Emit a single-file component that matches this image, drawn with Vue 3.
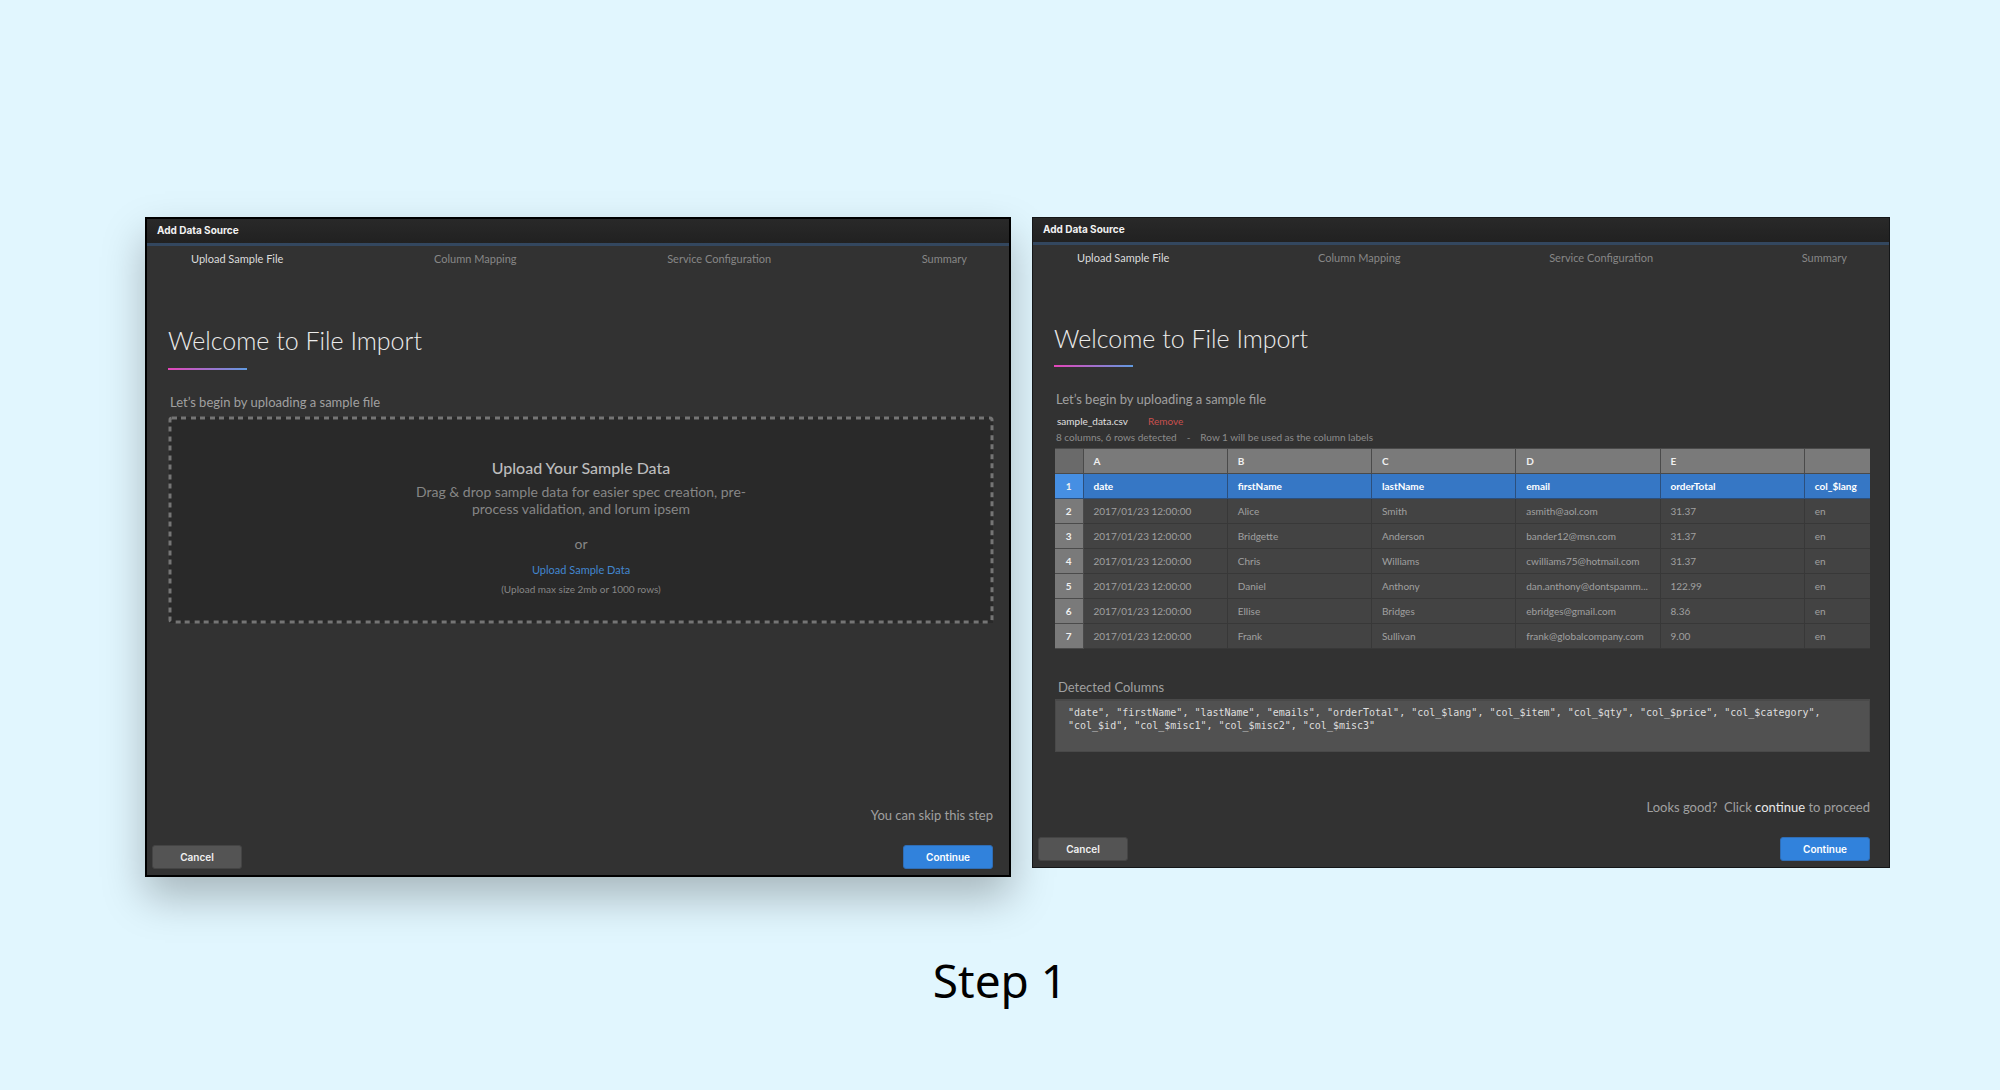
<script setup>
import { ref } from 'vue'

const steps = ['Upload Sample File', 'Column Mapping', 'Service Configuration', 'Summary']
const letters = ['A', 'B', 'C', 'D', 'E', '']
const labels = ['date', 'firstName', 'lastName', 'email', 'orderTotal', 'col_$lang']
const rows = [
  ['2017/01/23 12:00:00', 'Alice', 'Smith', 'asmith@aol.com', '31.37', 'en'],
  ['2017/01/23 12:00:00', 'Bridgette', 'Anderson', 'bander12@msn.com', '31.37', 'en'],
  ['2017/01/23 12:00:00', 'Chris', 'Williams', 'cwilliams75@hotmail.com', '31.37', 'en'],
  ['2017/01/23 12:00:00', 'Daniel', 'Anthony', 'dan.anthony@dontspamm...', '122.99', 'en'],
  ['2017/01/23 12:00:00', 'Ellise', 'Bridges', 'ebridges@gmail.com', '8.36', 'en'],
  ['2017/01/23 12:00:00', 'Frank', 'Sullivan', 'frank@globalcompany.com', '9.00', 'en'],
]
const detected = ref(
  [
    'date', 'firstName', 'lastName', 'emails', 'orderTotal', 'col_$lang', 'col_$item', 'col_$qty',
    'col_$price', 'col_$category', 'col_$id', 'col_$misc1', 'col_$misc2', 'col_$misc3',
  ].map((name) => `"${name}"`).join(', ')
)
</script>

<template>
  <main class="board">
    <div class="panels">
      <section class="panel upload">
        <header class="bar">Add Data Source</header>
        <nav class="steps">
          <a v-for="(step, i) in steps" :key="step" href="#" :class="{ active: i === 0 }">{{ step }}</a>
        </nav>
        <div class="body">
          <h1>Welcome to File Import</h1>
          <div class="rule"></div>
          <p class="intro">Let’s begin by uploading a sample file</p>
          <div class="dropzone">
            <svg class="outline" aria-hidden="true"><rect /></svg>
            <h2>Upload Your Sample Data</h2>
            <p class="hint">Drag &amp; drop sample data for easier spec creation, pre-<br />process validation, and lorum ipsem</p>
            <p class="or">or</p>
            <a href="#" class="pick">Upload Sample Data</a>
            <p class="limit">(Upload max size 2mb or 1000 rows)</p>
          </div>
          <p class="note">You can skip this step</p>
        </div>
        <footer class="actions">
          <button type="button">Cancel</button>
          <button type="button" class="primary">Continue</button>
        </footer>
      </section>

      <section class="panel preview">
        <header class="bar">Add Data Source</header>
        <nav class="steps">
          <a v-for="(step, i) in steps" :key="step" href="#" :class="{ active: i === 0 }">{{ step }}</a>
        </nav>
        <div class="body">
          <h1>Welcome to File Import</h1>
          <div class="rule"></div>
          <p class="intro">Let’s begin by uploading a sample file</p>
          <div class="file">
            <span>sample_data.csv</span>
            <a href="#">Remove</a>
          </div>
          <div class="summary">
            <span>8 columns, 6 rows detected</span>
            <span>-</span>
            <span>Row 1 will be used as the column labels</span>
          </div>
          <table>
            <colgroup>
              <col class="num" />
              <col v-for="n in 5" :key="n" class="wide" />
              <col />
            </colgroup>
            <thead>
              <tr>
                <th></th>
                <th v-for="(letter, i) in letters" :key="i">{{ letter }}</th>
              </tr>
            </thead>
            <tbody>
              <tr class="labels">
                <th>1</th>
                <td v-for="label in labels" :key="label">{{ label }}</td>
              </tr>
              <tr v-for="(row, r) in rows" :key="r">
                <th>{{ r + 2 }}</th>
                <td v-for="(cell, c) in row" :key="c">{{ cell }}</td>
              </tr>
            </tbody>
          </table>
          <label class="detected" for="detected-columns">Detected Columns</label>
          <textarea id="detected-columns" v-model="detected" readonly></textarea>
          <p class="note">Looks good?&nbsp; Click <strong>continue</strong> to proceed</p>
        </div>
        <footer class="actions">
          <button type="button">Cancel</button>
          <button type="button" class="primary">Continue</button>
        </footer>
      </section>
    </div>
    <p class="caption">Step 1</p>
  </main>
</template>

<style>
html,
body {
  margin: 0;
  background: #e1f6fe;
}
</style>

<style scoped>
.board {
  box-sizing: border-box;
  min-height: 100vh;
  padding: 217px 110px 0 145px;
  font-family: Lato, 'Open Sans', sans-serif;
  background: #e1f6fe;
}

.panels {
  display: grid;
  grid-template-columns: 866fr 858fr;
  gap: 21px;
  align-items: start;
}

.panel {
  --edge: 16px;
  --head-gap: 57px;
  --rule-gap: 12px;
  background: #323232;
  color: #a0a0a0;
  min-width: 0;
}

.upload {
  border: 2px solid #000;
  box-shadow: 0 20px 40px rgba(0, 0, 0, 0.26);
}

.preview {
  --edge: 19px;
  --head-gap: 56px;
  --rule-gap: 11px;
  position: relative;
  border: 1px solid #141618;
}

.bar {
  padding: 0 10px 2px;
  border-bottom: 3px solid #33475f;
  background: linear-gradient(#292929, #212121);
  color: #f2f2f2;
  font: bold 10px/22px Inter, sans-serif;
}

.steps {
  display: flex;
  justify-content: space-between;
  padding: 5px 42px 0 44px;
  font-size: 11px;
  line-height: 16px;
}

.steps a {
  color: #878787;
  text-decoration: none;
}

.steps .active {
  color: #dcdcdc;
}

.body {
  display: flex;
  flex-direction: column;
  padding: var(--head-gap) var(--edge) 0 21px;
}

h1,
h2,
p {
  margin: 0;
}

h1 {
  color: #ececec;
  font-size: 25px;
  font-weight: 300;
  line-height: 32px;
}

.rule {
  width: 79px;
  height: 2px;
  margin-top: var(--rule-gap);
  background: linear-gradient(90deg, #e545b8, #609ae0);
}

.intro {
  margin: 24px 2px 7px;
  font-size: 13px;
  line-height: 16px;
}

.dropzone {
  position: relative;
  display: flex;
  flex-direction: column;
  align-items: center;
  margin-left: 1px;
  padding: 41px 20px 27px;
  background: #292929;
  color: #868686;
  text-align: center;
}

.outline {
  position: absolute;
  inset: 0;
  width: 100%;
  height: 100%;
  overflow: visible;
  pointer-events: none;
}

.outline rect {
  x: 1px;
  y: 1px;
  width: calc(100% - 2px);
  height: calc(100% - 2px);
  rx: 2px;
  fill: none;
  stroke: #757575;
  stroke-width: 3px;
  stroke-dasharray: 5 4 5 5;
}

h2 {
  color: #bcbcbc;
  font-size: 16px;
  font-weight: 500;
  line-height: 20px;
}

.hint {
  margin-top: 5px;
  font-size: 14px;
  line-height: 17px;
}

.or {
  margin-top: 18px;
  font-size: 14px;
  line-height: 17px;
}

.pick {
  margin-top: 11px;
  color: #4286cf;
  font-size: 11px;
  line-height: 14px;
  text-decoration: none;
}

.limit {
  margin-top: 5px;
  font-size: 10px;
  line-height: 14px;
}

.note {
  margin-top: 184px;
  font-size: 13px;
  line-height: 16px;
  text-align: right;
}

.preview .note {
  margin-top: 47px;
}

.note strong {
  color: #e8e8e8;
  font-weight: 400;
}

.file {
  display: flex;
  gap: 20px;
  margin-left: 3px;
  color: #e0e0e0;
  font-size: 10px;
  line-height: 14px;
}

.file a {
  color: #c9504e;
  text-decoration: none;
}

.summary {
  display: flex;
  gap: 10px;
  margin: 2px 2px 4px;
  color: #8c8c8c;
  font-size: 10px;
  line-height: 14px;
}

table {
  width: calc(100% - 1px);
  margin-left: 1px;
  border-collapse: collapse;
  table-layout: fixed;
  font-size: 10px;
  line-height: 24px;
}

.num {
  width: 28px;
}

.wide {
  width: 17.7%;
}

th,
td {
  height: 24px;
  padding: 0 0 0 10px;
  border: 1px solid #383838;
  background: #434343;
  color: #a0a0a0;
  overflow: hidden;
  text-align: left;
  white-space: nowrap;
}

tr > :first-child {
  border-left: 0;
}

tr > :last-child {
  border-right: 0;
}

th {
  border-color: #4a4a4a;
  background: #7a7a7a;
  color: #f0f0f0;
}

thead th:first-child {
  background: #6a6a6a;
}

tbody th {
  padding: 0;
  text-align: center;
}

.labels td {
  border-color: #2c4f7c;
  background: #3677c5;
  color: #fff;
  font-weight: bold;
}

.labels th {
  border-color: #2c4f7c;
  background: #468fe3;
}

.detected {
  margin: 30px 4px 4px;
  font-size: 13px;
  line-height: 16px;
}

textarea {
  box-sizing: border-box;
  height: 53px;
  margin-left: 1px;
  padding: 5px 12px;
  border: 1px solid #494949;
  border-top-width: 2px;
  outline: 0;
  background: #515151;
  color: #dedede;
  font: 10px/13px 'DejaVu Sans Mono', monospace;
  overflow: hidden;
  resize: none;
}

.actions {
  display: flex;
  justify-content: space-between;
  padding: 22px var(--edge) 6px 5px;
}

button {
  width: 90px;
  height: 24px;
  padding: 1px 0 0;
  border: 1px solid #444;
  border-radius: 3px;
  background: #545454;
  color: #f0f0f0;
  font: 600 10px/21px Inter, sans-serif;
}

.primary {
  border-color: #2f6db5;
  background: #3182dc;
  color: #fff;
}

.caption {
  margin-top: 70px;
  padding-right: 35px;
  color: #000;
  font: 46px/66px 'Noto Sans', sans-serif;
  text-align: center;
}
</style>
